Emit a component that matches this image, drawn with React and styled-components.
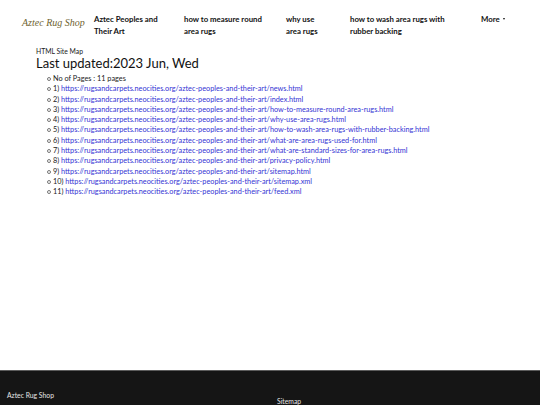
import React from "react";
import styled, { createGlobalStyle } from "styled-components";

const Global = createGlobalStyle`
  html, body {
    margin: 0;
    padding: 0;
    background: #fff;
    font-family: Lato, "Open Sans", sans-serif;
    color: #222;
  }
`;

const Page = styled.div`
  display: flex;
  flex-direction: column;
  min-height: 100vh;
`;

const NavBar = styled.nav`
  display: flex;
  align-items: flex-start;
  height: 45px;
  padding: 13px 0 0 22px;
  box-sizing: border-box;
`;

const Brand = styled.a`
  font-family: "Liberation Serif", serif;
  font-style: italic;
  font-size: 10px;
  color: #6f6330;
  width: 72px;
  margin-top: 4px;
  white-space: nowrap;
`;

const NavItem = styled.a`
  display: flex;
  align-items: center;
  gap: 3px;
  width: ${(p) => p.w}px;
  font-size: 7.8px;
  font-weight: 700;
  line-height: 12px;
  color: #111;
  text-decoration: none;
`;

const Label = styled.span`
  max-width: ${(p) => p.max}px;
`;

const Caret = styled.span`
  display: inline-block;
  border-left: 1.8px solid transparent;
  border-right: 1.8px solid transparent;
  border-top: 2.2px solid #111;
  margin-top: 0;
`;

const Main = styled.main`
  padding: 0 0 0 36px;
  height: 325px;
`;

const Small = styled.div`
  font-size: 6.8px;
  margin-top: 2px;
`;

const Title = styled.h1`
  margin: 1px 0 3px;
  font-size: 13px;
  font-weight: 400;
  line-height: 15px;
  color: #111;
`;

const List = styled.ul`
  margin: 0;
  padding-left: 17px;
  list-style: none;
  font-size: 7.3px;
  line-height: 10.3px;
`;

const Item = styled.li`
  position: relative;

  &::before {
    content: "";
    position: absolute;
    left: -6px;
    top: 3px;
    width: 2px;
    height: 2px;
    border: 0.7px solid #777;
    border-radius: 50%;
  }
`;

const Link = styled.a`
  color: #3434d4;
  text-decoration: none;
`;

const Footer = styled.footer`
  flex: 1;
  background: #151515;
  border-top: 1.5px solid #5c5c5c;
  display: grid;
  grid-template-columns: 270px 1fr;
  padding: 20px 7px 0;
  color: #e6e6e6;
  font-size: 6.8px;
`;

const FooterCol = styled.div`
  padding-top: ${(p) => p.offset || 0}px;
`;

const base = "https://rugsandcarpets.neocities.org/aztec-peoples-and-their-art/";
const pages = [
  "news.html",
  "index.html",
  "how-to-measure-round-area-rugs.html",
  "why-use-area-rugs.html",
  "how-to-wash-area-rugs-with-rubber-backing.html",
  "what-are-area-rugs-used-for.html",
  "what-are-standard-sizes-for-area-rugs.html",
  "privacy-policy.html",
  "sitemap.html",
  "sitemap.xml",
  "feed.xml",
];

const navLinks = [
  { label: "Aztec Peoples and Their Art", w: 90, max: 72 },
  { label: "how to measure round area rugs", w: 102, max: 86 },
  { label: "why use area rugs", w: 64, max: 40 },
  { label: "how to wash area rugs with rubber backing", w: 131, max: 104 },
];

export default function App() {
  return (
    <Page>
      <Global />
      <NavBar>
        <Brand>Aztec Rug Shop</Brand>
        {navLinks.map((n) => (
          <NavItem key={n.label} w={n.w}>
            <Label max={n.max}>{n.label}</Label>
          </NavItem>
        ))}
        <NavItem w={40}>
          More <Caret />
        </NavItem>
      </NavBar>
      <Main>
        <Small>HTML Site Map</Small>
        <Title>Last updated:2023 Jun, Wed</Title>
        <List>
          <Item>No of Pages : 11 pages</Item>
          {pages.map((p, i) => (
            <Item key={p}>
              {i + 1}) <Link href={base + p}>{base + p}</Link>
            </Item>
          ))}
        </List>
      </Main>
      <Footer>
        <FooterCol>Aztec Rug Shop</FooterCol>
        <FooterCol offset={6}>Sitemap</FooterCol>
      </Footer>
    </Page>
  );
}
